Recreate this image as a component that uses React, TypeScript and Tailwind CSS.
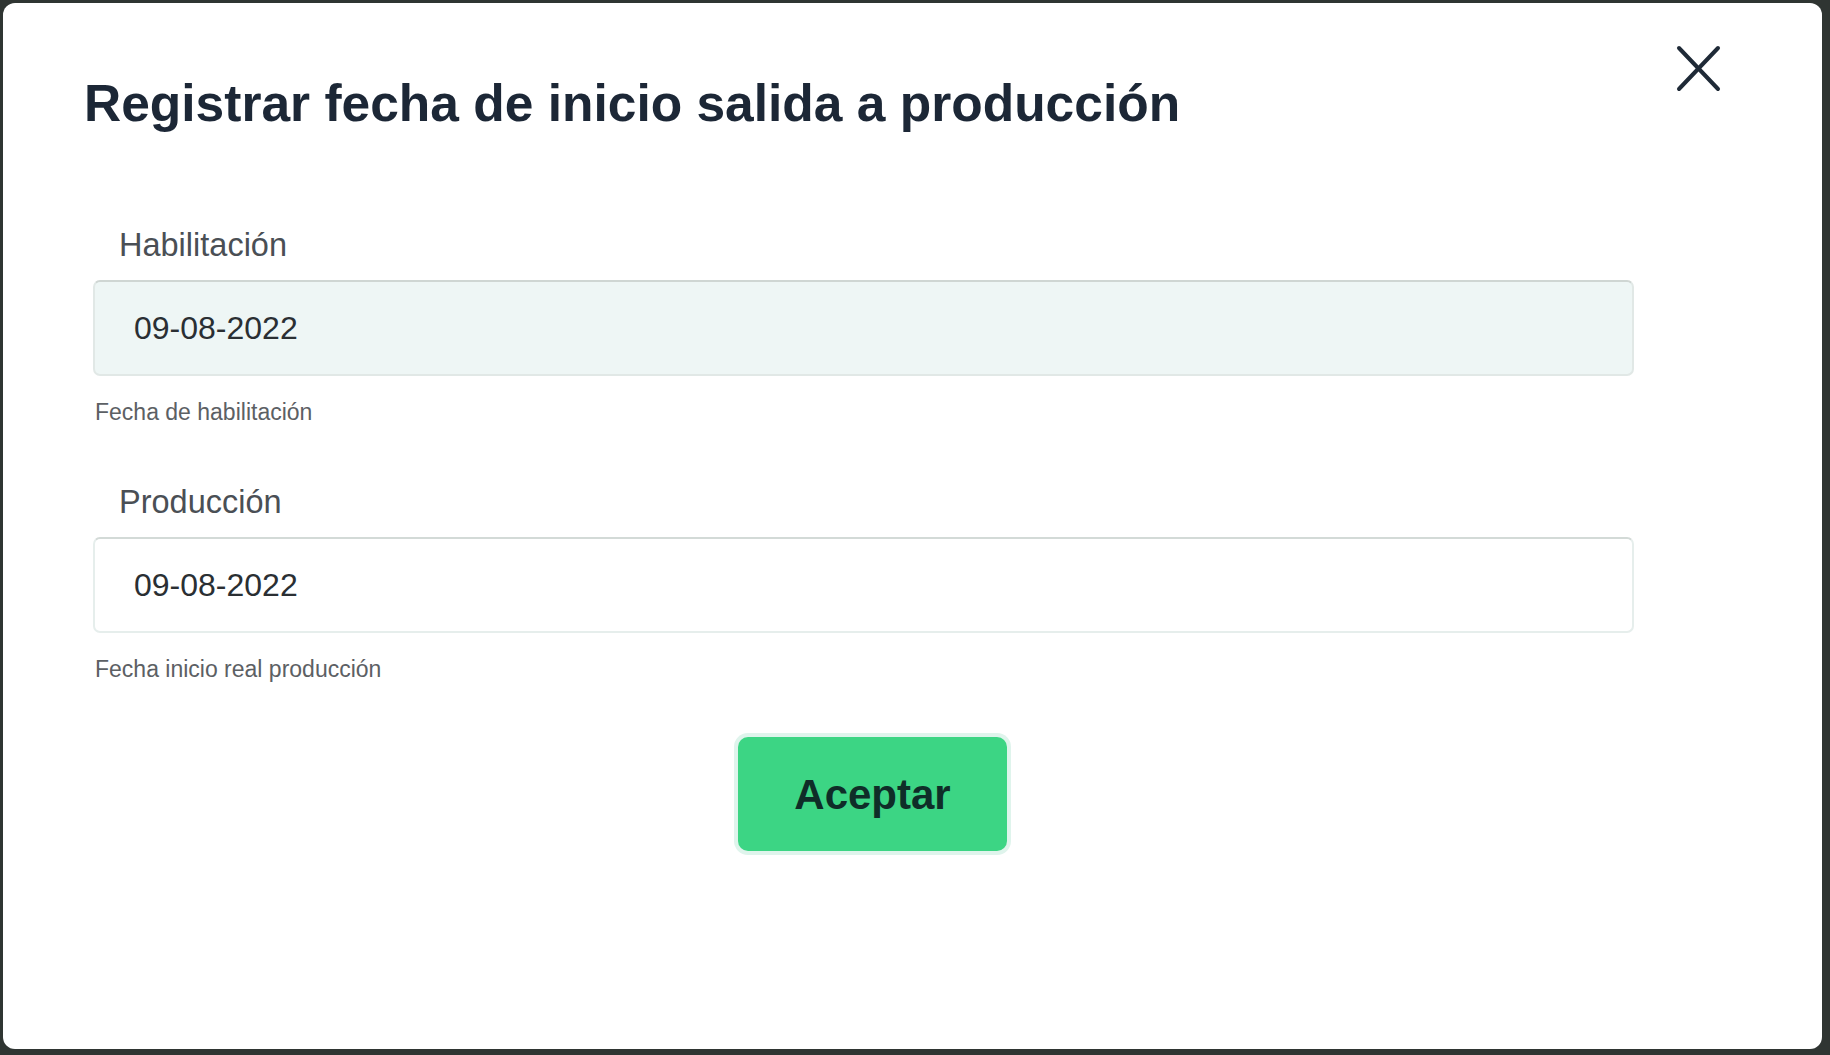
const FONT = "font-['Liberation_Sans',Arial,sans-serif]"

type FieldProps = {
  label: string
  value: string
  helper: string
  readOnly?: boolean
}

function DateField({ label, value, helper, readOnly }: FieldProps) {
  return (
    <div className="flex flex-col">
      <label className="pl-[26px] text-[32.5px] leading-[32px] text-[#4a4f55]">{label}</label>
      <div
        className={`mt-[19px] flex h-[96px] items-center rounded-[7px] border-2 pl-[39px] ${
          readOnly
            ? 'border-[#e1e8e6] border-t-[#cfd6d3] bg-[#eef6f5]'
            : 'border-[#e6eeec] border-t-[#d3dad7] bg-white'
        }`}
      >
        <span className="text-[32px] leading-[32px] text-[#2a2f33]">{value}</span>
      </div>
      <p className="mt-[25px] pl-[2px] text-[23px] leading-[23px] text-[#5c6064]">{helper}</p>
    </div>
  )
}

export default function App() {
  return (
    <div className={`h-[1055px] w-full bg-[#2f3532] pb-[6px] pl-[3px] pr-[8px] pt-[3px] ${FONT}`}>
      <div className="h-full w-full rounded-[12px] bg-white">
        {/* header */}
        <div className="flex items-start justify-between pl-[81px] pr-[101px] pt-[42px]">
          <h1 className="mt-[33px] text-[51.5px] font-bold leading-[51px] text-[#1c2736]">
            Registrar fecha de inicio salida a producción
          </h1>
          <button className="h-[47px] w-[45px]" aria-label="Cerrar">
            <svg viewBox="0 0 45 47" className="h-[47px] w-[45px]" fill="none" stroke="#1f2a37" strokeWidth="4" strokeLinecap="round">
              <line x1="3" y1="3" x2="42" y2="44" />
              <line x1="42" y1="3" x2="3" y2="44" />
            </svg>
          </button>
        </div>

        {/* form */}
        <div className="mt-[100px] flex flex-col pl-[90px] pr-[188px]">
          <DateField label="Habilitación" value="09-08-2022" helper="Fecha de habilitación" readOnly />
          <div className="mt-[62px]">
            <DateField label="Producción" value="09-08-2022" helper="Fecha inicio real producción" />
          </div>

          <div className="mt-[56px] flex justify-center pl-[18px]">
            <button className="flex h-[114px] w-[269px] items-center justify-center rounded-[10px] bg-[#3cd584] text-[42px] font-bold text-[#0f2d28] shadow-[0_0_0_4px_#dff4ec]">
              Aceptar
            </button>
          </div>
        </div>
      </div>
    </div>
  )
}
